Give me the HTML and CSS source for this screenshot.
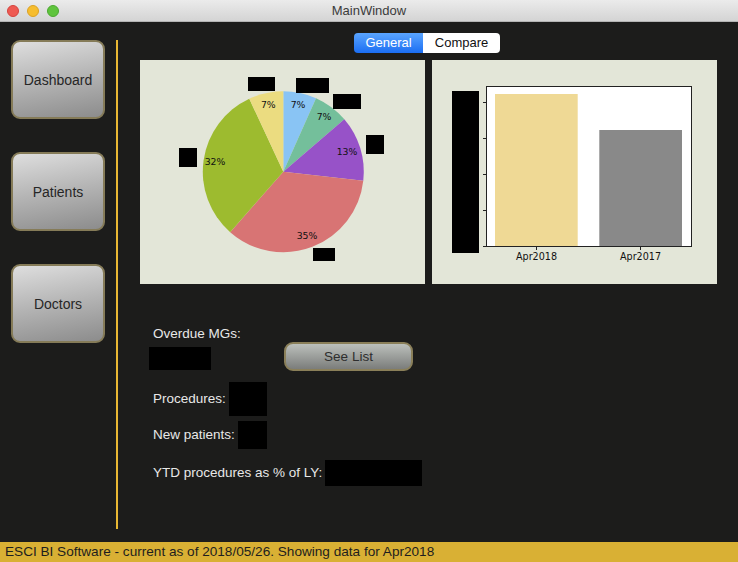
FILE: index.html
```html
<!DOCTYPE html>
<html>
<head>
<meta charset="utf-8">
<title>MainWindow</title>
<link rel="stylesheet" href="styles.css">
</head>
<body>
<div class="window">
  <header class="titlebar">
    <div class="lights">
      <span class="light red"></span>
      <span class="light yellow"></span>
      <span class="light green"></span>
    </div>
    <div class="title">MainWindow</div>
  </header>

  <div class="main">
    <nav class="sidebar">
      <button class="nav-btn">Dashboard</button>
      <button class="nav-btn">Patients</button>
      <button class="nav-btn">Doctors</button>
    </nav>
    <div class="divider"></div>

    <section class="content">
      <div class="tabs">
        <span class="tab active">General</span>
        <span class="tab">Compare</span>
      </div>

      <div class="charts">
        <div class="panel">
          <svg class="chart" width="285" height="224" viewBox="0 0 285 224">
            <path d="M143.3 111.7 L143.3 31.2 A80.5 80.5 0 0 1 176.04 38.16 Z" fill="#89c4f4"/>
            <path d="M143.3 111.7 L176.04 38.16 A80.5 80.5 0 0 1 204.33 59.21 Z" fill="#74bf9b"/>
            <path d="M143.3 111.7 L204.33 59.21 A80.5 80.5 0 0 1 223.28 120.81 Z" fill="#9752c8"/>
            <path d="M143.3 111.7 L223.28 120.81 A80.5 80.5 0 0 1 90.17 172.18 Z" fill="#d87474"/>
            <path d="M143.3 111.7 L90.17 172.18 A80.5 80.5 0 0 1 109.28 38.74 Z" fill="#9dbb2f"/>
            <path d="M143.3 111.7 L109.28 38.74 A80.5 80.5 0 0 1 143.3 31.2 Z" fill="#ebdc80"/>
            <g class="pct">
              <text x="128.3" y="47.5">7%</text>
              <text x="158" y="47.5">7%</text>
              <text x="184" y="59.5">7%</text>
              <text x="207" y="94.5">13%</text>
              <text x="167" y="178.5">35%</text>
              <text x="75" y="104.5">32%</text>
            </g>
            <g fill="#000">
              <rect x="108" y="17" width="27" height="14"/>
              <rect x="156" y="18" width="33" height="15"/>
              <rect x="193" y="34" width="28" height="15"/>
              <rect x="226" y="75" width="18" height="19"/>
              <rect x="39" y="88" width="18" height="19"/>
              <rect x="173" y="188" width="22" height="13"/>
            </g>
          </svg>
        </div>
        <div class="panel">
          <svg class="chart" width="285" height="224" viewBox="0 0 285 224">
            <rect x="54.5" y="26.5" width="205" height="160" fill="#fff"/>
            <rect x="63" y="34" width="82.7" height="152.5" fill="#efd995"/>
            <rect x="167.3" y="70" width="82.7" height="116.5" fill="#898989"/>
            <rect x="54.5" y="26.5" width="205" height="160" fill="none" stroke="#222" stroke-width="1"/>
            <g stroke="#222" stroke-width="1">
              <line x1="51" y1="42.5" x2="54.5" y2="42.5"/>
              <line x1="51" y1="78.5" x2="54.5" y2="78.5"/>
              <line x1="51" y1="114.5" x2="54.5" y2="114.5"/>
              <line x1="51" y1="150.5" x2="54.5" y2="150.5"/>
              <line x1="51" y1="186.5" x2="54.5" y2="186.5"/>
              <line x1="104.5" y1="186.5" x2="104.5" y2="190"/>
              <line x1="208.5" y1="186.5" x2="208.5" y2="190"/>
            </g>
            <g class="tick">
              <text x="104.5" y="200">Apr2018</text>
              <text x="208.5" y="200">Apr2017</text>
            </g>
            <rect x="20" y="31" width="27" height="162" fill="#000"/>
          </svg>
        </div>
      </div>

      <div class="stats">
        <div class="label">Overdue MGs:</div>
        <div class="row row-overdue">
          <span class="redact redact-overdue"></span>
          <button class="list-btn">See List</button>
        </div>
        <div class="row row-proc">
          <span class="label">Procedures:</span>
          <span class="redact redact-proc"></span>
        </div>
        <div class="row row-new">
          <span class="label">New patients:</span>
          <span class="redact redact-new"></span>
        </div>
        <div class="row row-ytd">
          <span class="label">YTD procedures as % of LY:</span>
          <span class="redact redact-ytd"></span>
        </div>
      </div>
    </section>
  </div>

  <footer class="status">ESCI BI Software - current as of 2018/05/26. Showing data for Apr2018</footer>
</div>
</body>
</html>
```

FILE: styles.css
```css
* { box-sizing: border-box; }

html, body {
  margin: 0;
  padding: 0;
  background: #1c1c1b;
}

body {
  width: 738px;
  height: 562px;
  overflow: hidden;
  font-family: "Liberation Sans", Arial, sans-serif;
}

.window {
  width: 738px;
  height: 562px;
  display: flex;
  flex-direction: column;
  background: #1c1c1b;
}

/* title bar */
.titlebar {
  height: 22px;
  flex: 0 0 22px;
  display: flex;
  align-items: center;
  position: relative;
  background: linear-gradient(#ebebeb, #d4d4d4);
  border-bottom: 1px solid #b4b4b4;
}

.lights {
  display: flex;
  gap: 8px;
  padding-left: 7px;
}

.light {
  width: 12px;
  height: 12px;
  border-radius: 50%;
  display: block;
}
.light.red { background: #ee5a52; border: 1px solid #d5443e; }
.light.yellow { background: #f6bd2e; border: 1px solid #dca223; }
.light.green { background: #5fc43d; border: 1px solid #4ca830; }

.title {
  position: absolute;
  left: 0;
  right: 0;
  top: 0;
  line-height: 21px;
  text-align: center;
  font-size: 13px;
  color: #3b3b3b;
}

/* main area */
.main {
  flex: 1;
  display: flex;
  align-items: flex-start;
}

.sidebar {
  display: flex;
  flex-direction: column;
  gap: 33px;
  padding: 18px 0 0 11px;
}

.nav-btn {
  width: 94px;
  height: 79px;
  border: 2px solid #857b58;
  border-radius: 9px;
  background: linear-gradient(170deg, #dedede 0%, #b4b4b4 50%, #8c8c8c 100%);
  font-family: "Liberation Sans", Arial, sans-serif;
  font-size: 14px;
  color: #262626;
  padding: 0;
}

.divider {
  width: 2px;
  height: 489px;
  margin: 18px 0 0 11px;
  background: #e8b733;
}

.content {
  width: 577px;
  margin-left: 22px;
  padding-top: 11px;
}

.tabs {
  display: flex;
  justify-content: center;
  height: 20px;
  padding-right: 3px;
}

.tab {
  height: 20px;
  line-height: 20px;
  font-size: 13px;
  text-align: center;
  background: #fff;
  color: #111;
  width: 77px;
  border-radius: 0 4px 4px 0;
}

.tab.active {
  width: 69px;
  color: #fff;
  border-radius: 4px 0 0 4px;
  background: linear-gradient(#5aa5ff, #1b6ef3);
}

.charts {
  display: flex;
  gap: 7px;
  margin-top: 7px;
}

.panel {
  width: 285px;
  height: 224px;
  background: #e3e6d8;
}

.chart { display: block; }

.pct text {
  font-family: "DejaVu Sans", sans-serif;
  font-size: 9.3px;
  fill: #111;
  text-anchor: middle;
}

.tick text {
  font-family: "DejaVu Sans", sans-serif;
  font-size: 9.6px;
  fill: #111;
  text-anchor: middle;
}

/* stats */
.stats {
  padding-left: 13px;
  margin-top: 42px;
  color: #e8e8e8;
  font-size: 13.5px;
}

.label {
  line-height: 16px;
  font-size: 13.5px;
  color: #e8e8e8;
}

.row {
  display: flex;
  align-items: center;
  gap: 3px;
}

.redact {
  display: block;
  background: #000;
}

.row-overdue {
  align-items: flex-start;
  height: 29px;
  gap: 0;
}

.redact-overdue {
  width: 62px;
  height: 23px;
  margin: 5px 0 0 -4px;
}

.list-btn {
  width: 129px;
  height: 29px;
  margin-left: 73px;
  border: 2px solid #8a7f59;
  border-radius: 9px;
  background: linear-gradient(#bcc0bc, #7b7d7b);
  font-family: "Liberation Sans", Arial, sans-serif;
  font-size: 13.5px;
  color: #2e2e2e;
  padding: 0;
}

.row-proc { margin-top: 11px; }
.redact-proc { width: 38px; height: 34px; }

.row-new { margin-top: 5px; }
.redact-new { width: 29px; height: 28px; }

.row-ytd { margin-top: 11px; }
.redact-ytd { width: 97px; height: 26px; }

/* status bar */
.status {
  height: 20px;
  flex: 0 0 20px;
  background: #d9b034;
  color: #1e1e1e;
  font-size: 13.6px;
  line-height: 20px;
  padding-left: 5px;
  white-space: nowrap;
}
```
